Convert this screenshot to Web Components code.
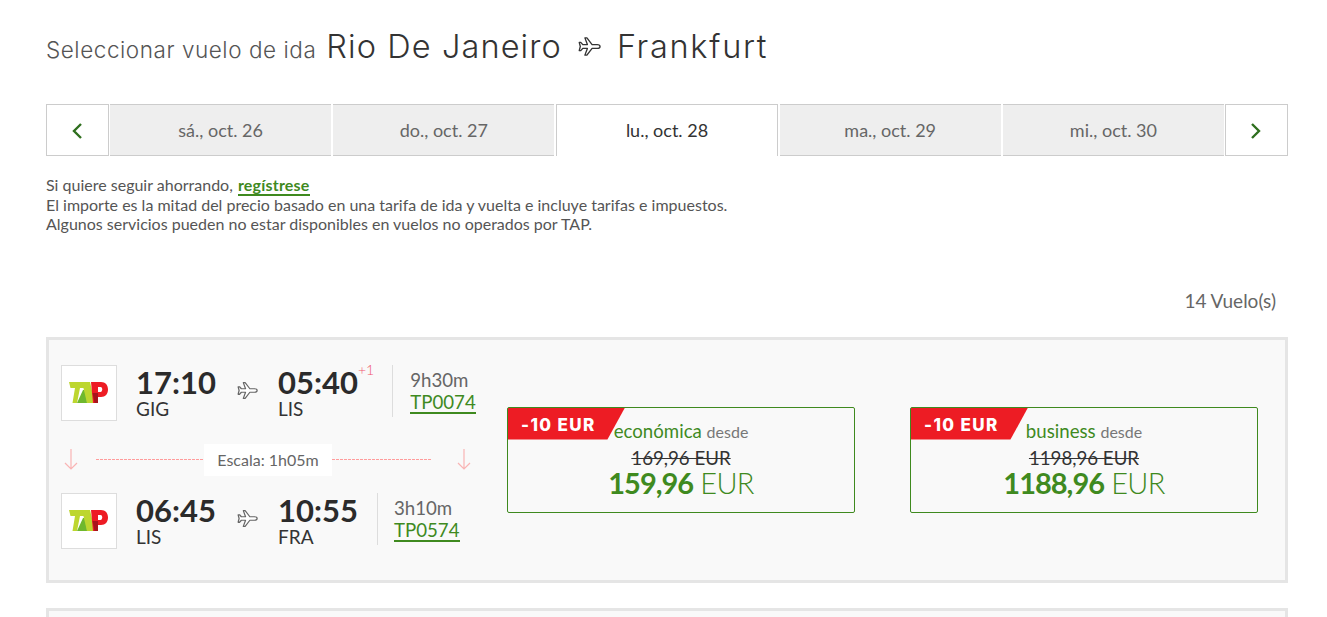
<!DOCTYPE html>
<html lang="es">
<head>
<meta charset="utf-8">
<title>Seleccionar vuelo</title>
<style>
  html, body { margin: 0; height: 617px; overflow: hidden; background: #fff; }
  body { font-family: Lato, "Liberation Sans", sans-serif; color: #333; }
</style>
</head>
<body>
<search-page>
  <route-heading slot="heading" from="Rio De Janeiro" to="Frankfurt">Seleccionar vuelo de ida</route-heading>
  <date-tabs slot="tabs">
    <date-tab>sá., oct. 26</date-tab>
    <date-tab>do., oct. 27</date-tab>
    <date-tab active>lu., oct. 28</date-tab>
    <date-tab>ma., oct. 29</date-tab>
    <date-tab>mi., oct. 30</date-tab>
  </date-tabs>
  <fare-notes slot="notes"></fare-notes>
  <flight-card>
    <flight-leg dep="17:10" from="GIG" arr="05:40" to="LIS" plus="+1" time="9h30m" code="TP0074" slot="legs"></flight-leg>
    <lay-over slot="legs">Escala: 1h05m</lay-over>
    <flight-leg dep="06:45" from="LIS" arr="10:55" to="FRA" time="3h10m" code="TP0574" slot="legs"></flight-leg>
    <fare-box label="económica" old="169,96 EUR" price="159,96"></fare-box>
    <fare-box label="business" old="1198,96 EUR" price="1188,96"></fare-box>
  </flight-card>
  <flight-card empty></flight-card>
</search-page>

<script>
const html = String.raw;

const planeIcon = (size, stroke = "#666") => html`
  <svg width="${size}" height="${size}" viewBox="0 0 24 24" fill="#fff" stroke="${stroke}" stroke-width="1.400" stroke-linejoin="round" aria-hidden="true">
    <path d="M23 12c0-1.100-1.300-2-3-2h-5.300L9.300 3H7.200l2.600 7H5L2.900 7.700H1.300L2.400 12l-1.100 4.300h1.600L5 14h4.800l-2.600 7h2.100l5.400-7H20c1.700 0 3-.900 3-2z"/>
  </svg>`;

class BaseElement extends HTMLElement {
  constructor() {
    super();
    this.attachShadow({ mode: "open" });
  }
}

class SearchPage extends BaseElement {
  connectedCallback() {
    this.shadowRoot.innerHTML = html`
      <style>
        :host { display: block; padding: 0 39px 0 46px; }
        .count { text-align: right; padding-right: 12px; font-size: 19px; line-height: 24px; color: #666; margin: 55px 0 24px; }
        .cards { display: flex; flex-direction: column; gap: 25px; }
      </style>
      <slot name="heading"></slot>
      <slot name="tabs"></slot>
      <slot name="notes"></slot>
      <div class="count">14 Vuelo(s)</div>
      <div class="cards"><slot></slot></div>
    `;
  }
}

class RouteHeading extends BaseElement {
  connectedCallback() {
    this.shadowRoot.innerHTML = html`
      <style>
        :host { display: flex; align-items: baseline; height: 104px; padding-top: 25px; box-sizing: border-box; font-family: Inter, "Open Sans", sans-serif; color: #333; }
        .lead { font-size: 22.500px; font-weight: 300; color: #555; margin-right: 10px; line-height: 44px; letter-spacing: .55px; }
        .city { font-size: 32.500px; font-weight: 300; line-height: 44px; letter-spacing: 1.100px; }
        .city.to { letter-spacing: 1.700px; }
        svg { align-self: flex-start; margin: 10px 16px 0 16px; }
      </style>
      <span class="lead"><slot></slot></span>
      <span class="city">${this.getAttribute("from")}</span>
      ${planeIcon(23, "#333")}
      <span class="city to">${this.getAttribute("to")}</span>
    `;
  }
}

class DateTabs extends BaseElement {
  connectedCallback() {
    const chevron = (d) => html`
      <svg width="12" height="18" viewBox="0 0 12 18" fill="none" stroke="#2f6f1e" stroke-width="2.400"><path d="${d}"/></svg>`;
    this.shadowRoot.innerHTML = html`
      <style>
        :host { display: flex; height: 52px; gap: 1px; box-sizing: border-box; }
        button { flex: 0 0 63px; box-sizing: border-box; border: 1px solid #ccc; background: #fff; padding: 0; display: flex; align-items: center; justify-content: center; font: inherit; }
        .tabs { flex: 1; display: grid; grid-template-columns: repeat(5, 1fr); gap: 2px; }
        button svg { margin: 2px 2px 0 0; }
      </style>
      <button aria-label="anterior">${chevron("M10 2 3 9l7 7")}</button>
      <div class="tabs"><slot></slot></div>
      <button class="next" aria-label="siguiente">${chevron("M2 2l7 7-7 7")}</button>
    `;
  }
}

class DateTab extends BaseElement {
  connectedCallback() {
    this.shadowRoot.innerHTML = html`
      <style>
        :host { display: flex; align-items: center; justify-content: center; box-sizing: border-box; background: #eee; border-top: 1px solid #ccc; border-bottom: 1px solid #ccc; font-size: 18px; color: #666; }
        :host([active]) { background: #fff; color: #333; border: 1px solid #ccc; border-bottom: 0; padding-bottom: 1px; }
      </style>
      <slot></slot>
    `;
  }
}

class FareNotes extends BaseElement {
  connectedCallback() {
    this.shadowRoot.innerHTML = html`
      <style>
        :host { display: block; margin-top: 19px; font-size: 16px; line-height: 19.500px; color: #555; }
        a { color: #3f8a1f; font-weight: 700; text-decoration: none; border-bottom: 2px solid #3f8a1f; letter-spacing: .2px; margin-left: 1px; }
      </style>
      Si quiere seguir ahorrando, <a href="#">regístrese</a><br>
      El importe es la mitad del precio basado en una tarifa de ida y vuelta e incluye tarifas e impuestos.<br>
      Algunos servicios pueden no estar disponibles en vuelos no operados por TAP.
    `;
  }
}

class FlightCard extends BaseElement {
  connectedCallback() {
    this.shadowRoot.innerHTML = html`
      <style>
        :host { display: flex; box-sizing: border-box; height: 246px; border: 3px solid #e5e5e5; background: #f9f9f9; padding: 25px 0 0 12px; }
        :host([empty]) { height: 60px; }
        .legs { flex: 0 0 446px; }
        .fares { display: flex; gap: 55px; margin-top: 42px; }
      </style>
      <div class="legs"><slot name="legs"></slot></div>
      <div class="fares"><slot></slot></div>
    `;
  }
}

class FlightLeg extends BaseElement {
  connectedCallback() {
    const plus = this.getAttribute("plus");
    this.shadowRoot.innerHTML = html`
      <style>
        :host { display: flex; align-items: flex-start; height: 56px; }
        .logo { flex: none; width: 56px; height: 56px; box-sizing: border-box; border: 1px solid #ddd; background: #fff; display: flex; align-items: center; justify-content: center; }
        .logo svg { margin-right: 2px; }
        .stop { display: flex; flex-direction: column; margin-top: 1px; width: 81px; }
        .stop.arr { width: auto; min-width: 80px; }
        .first { margin-left: 19px; }
        b { font-size: 31px; line-height: 33px; font-weight: 700; color: #2b2b2b; }
        .iata { font-size: 19px; line-height: 20px; color: #333; }
        .plane { flex: none; margin: 15px 20px 0 20px; display: flex; }
        .plus { flex: none; font-size: 14px; line-height: 14px; color: #f0566e; margin-top: -2px; font-weight: 300; }
        .time { flex: none; margin-left: 19px; padding-left: 16px; height: 52px; border-left: 1px solid #ddd; display: flex; flex-direction: column; align-items: flex-start; }
        .plus + .time { margin-left: 18px; padding-left: 17px; }
        .dur { font-size: 18.670px; line-height: 20px; color: #666; margin-top: 5px; }
        a { font-size: 18.670px; line-height: 20px; margin-top: 2px; color: #3f8a1f; text-decoration: none; border-bottom: 2px solid #3f8a1f; }
      </style>
      <div class="logo">
        <svg width="39" height="22" viewBox="0 0 39 22" aria-label="TAP">
          <path d="M0 0h17v6h-6L8 21H3.500L6 6H1.500z" fill="#bdd62f"/>
          <path d="M8 21l6-13h3.500l.5 13z" fill="#6fb82e"/>
          <path d="M13 0h8l5 21h-8z" fill="#bdd62f"/>
          <path d="M22 0h10c4.500 0 7 3 7 7.500S36.500 15 32 15h-3v6h-5z" fill="#ed1c24"/>
          <path d="M23.500 11h5.500v10h-3.500z" fill="#a8141c"/>
          <path d="M29 5h2.500c1 0 1.700.8 1.700 2.300S32.500 10 31.500 10H29z" fill="#fff"/>
        </svg>
      </div>
      <div class="stop first"><b>${this.getAttribute("dep")}</b><span class="iata">${this.getAttribute("from")}</span></div>
      <span class="plane">${planeIcon(21)}</span>
      <div class="stop arr"><b>${this.getAttribute("arr")}</b><span class="iata">${this.getAttribute("to")}</span></div>
      ${plus ? html`<span class="plus">${plus}</span>` : ""}
      <div class="time"><span class="dur">${this.getAttribute("time")}</span><a href="#">${this.getAttribute("code")}</a></div>
    `;
  }
}

class LayOver extends BaseElement {
  connectedCallback() {
    const arrow = html`<svg width="14" height="22" viewBox="0 0 14 22" fill="none" stroke="#f9b4b4" stroke-width="1.200"><path d="M7 1v20M1 15l6 6 6-6"/></svg>`;
    this.shadowRoot.innerHTML = html`
      <style>
        :host { display: flex; align-items: center; box-sizing: border-box; width: 407px; height: 72px; padding-top: 6px; margin-left: 3px; }
        svg { flex: none; margin-top: -2px; }
        /* dashes drawn with a gradient: a dashed border came out too sparse and looked grey */
        .line { flex: 1; margin: 0 25px 0 18px; background: repeating-linear-gradient(90deg, #ff9c9c 0 3px, transparent 3px 4px); display: flex; justify-content: center; height: 1px; align-items: center; }
        span { background: #fff; margin-left: 8px; padding: 0 13px; font-size: 16px; line-height: 32px; color: #666; white-space: nowrap; }
      </style>
      ${arrow}
      <div class="line"><span><slot></slot></span></div>
      ${arrow}
    `;
  }
}

class FareBox extends BaseElement {
  connectedCallback() {
    this.shadowRoot.innerHTML = html`
      <style>
        :host { display: block; position: relative; box-sizing: border-box; width: 348px; height: 106px; border: 1px solid #3f8a1f; border-radius: 2px; text-align: center; padding-top: 11px; }
        .badge { position: absolute; left: 0; top: 0; width: 117px; height: 32px; box-sizing: border-box; padding-left: 13px; background: #ed1c24; clip-path: polygon(0 0, 100% 0, 85% 100%, 0 100%); color: #fff; font-family: Inter, "Open Sans", sans-serif; font-weight: 800; font-size: 17px; letter-spacing: 1.400px; line-height: 34px; text-align: left; }
        .label { font-size: 18.670px; line-height: 24px; color: #3f8a1f; }
        .label small { font-size: 16px; color: #777; font-weight: 400; }
        s { display: block; font-size: 18.670px; line-height: 24px; color: #333; margin-top: 2px; }
        .price { font-size: 29px; line-height: 26px; color: #3f8a1f; font-weight: 300; letter-spacing: -.7px; }
        .price b { font-weight: 700; letter-spacing: -1px; }
      </style>
      <div class="badge">-10 EUR</div>
      <div class="label">${this.getAttribute("label")} <small>desde</small></div>
      <s>${this.getAttribute("old")}</s>
      <div class="price"><b>${this.getAttribute("price")}</b> EUR</div>
    `;
  }
}

customElements.define("search-page", SearchPage);
customElements.define("route-heading", RouteHeading);
customElements.define("date-tabs", DateTabs);
customElements.define("date-tab", DateTab);
customElements.define("fare-notes", FareNotes);
customElements.define("flight-card", FlightCard);
customElements.define("flight-leg", FlightLeg);
customElements.define("lay-over", LayOver);
customElements.define("fare-box", FareBox);
</script>
</body>
</html>
